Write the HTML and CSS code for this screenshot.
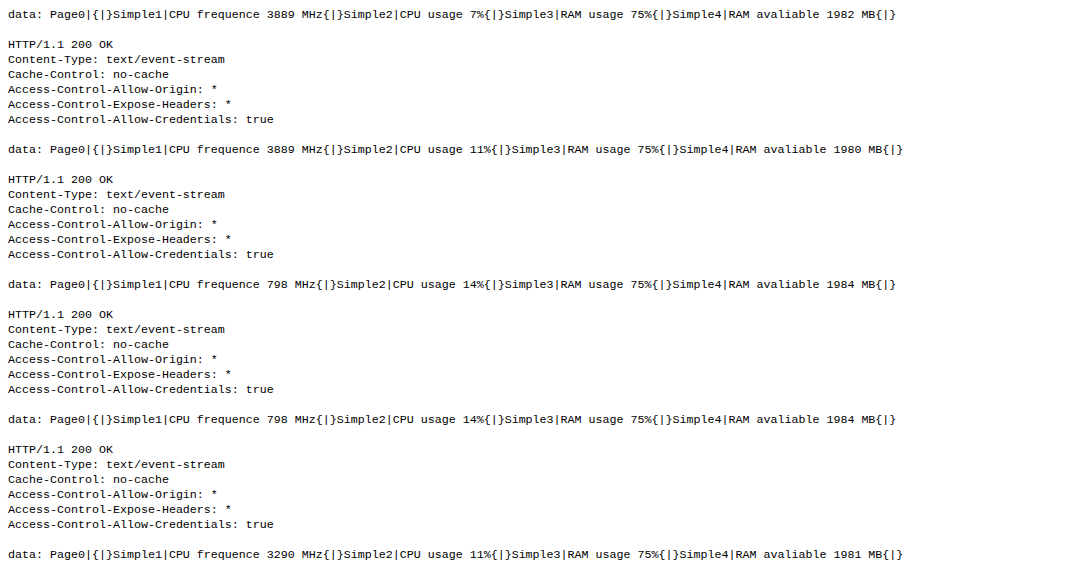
FILE: index.html
```html
<!DOCTYPE html>
<html>
<head>
<meta charset="utf-8">
<link rel="stylesheet" href="styles.css">
</head>
<body>
<pre class="stream">data: Page0|{|}Simple1|CPU frequence 3889 MHz{|}Simple2|CPU usage 7%{|}Simple3|RAM usage 75%{|}Simple4|RAM avaliable 1982 MB{|}

HTTP/1.1 200 OK
Content-Type: text/event-stream
Cache-Control: no-cache
Access-Control-Allow-Origin: *
Access-Control-Expose-Headers: *
Access-Control-Allow-Credentials: true

data: Page0|{|}Simple1|CPU frequence 3889 MHz{|}Simple2|CPU usage 11%{|}Simple3|RAM usage 75%{|}Simple4|RAM avaliable 1980 MB{|}

HTTP/1.1 200 OK
Content-Type: text/event-stream
Cache-Control: no-cache
Access-Control-Allow-Origin: *
Access-Control-Expose-Headers: *
Access-Control-Allow-Credentials: true

data: Page0|{|}Simple1|CPU frequence 798 MHz{|}Simple2|CPU usage 14%{|}Simple3|RAM usage 75%{|}Simple4|RAM avaliable 1984 MB{|}

HTTP/1.1 200 OK
Content-Type: text/event-stream
Cache-Control: no-cache
Access-Control-Allow-Origin: *
Access-Control-Expose-Headers: *
Access-Control-Allow-Credentials: true

data: Page0|{|}Simple1|CPU frequence 798 MHz{|}Simple2|CPU usage 14%{|}Simple3|RAM usage 75%{|}Simple4|RAM avaliable 1984 MB{|}

HTTP/1.1 200 OK
Content-Type: text/event-stream
Cache-Control: no-cache
Access-Control-Allow-Origin: *
Access-Control-Expose-Headers: *
Access-Control-Allow-Credentials: true

data: Page0|{|}Simple1|CPU frequence 3290 MHz{|}Simple2|CPU usage 11%{|}Simple3|RAM usage 75%{|}Simple4|RAM avaliable 1981 MB{|}</pre>
</body>
</html>
```
FILE: styles.css
```css
html, body {
  background: #ffffff;
}
body {
  margin: 0;
  padding: 8px 8px 8px 8px;
}
.stream {
  margin: 0;
  font-family: "Liberation Mono", "DejaVu Sans Mono", monospace;
  font-size: 11.67px;
  line-height: 15px;
  color: #000000;
  white-space: pre-wrap;
}
```
